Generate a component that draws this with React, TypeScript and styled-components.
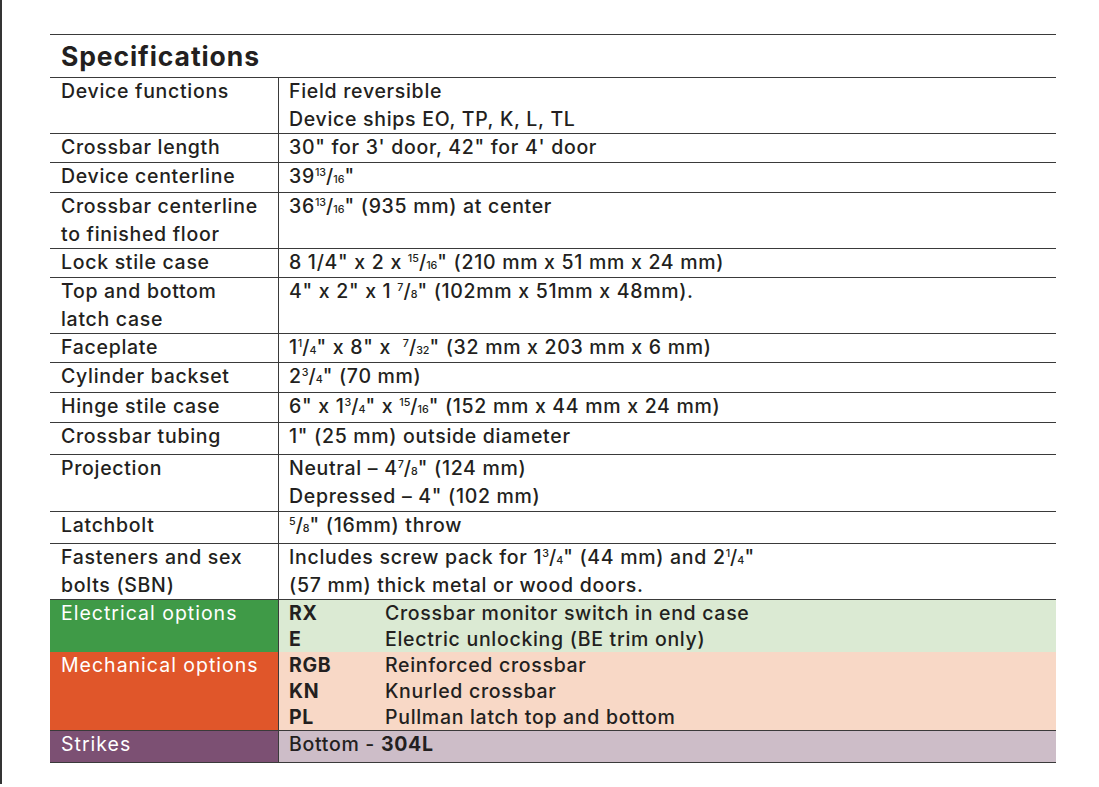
import React from 'react';
import styled, { createGlobalStyle } from 'styled-components';

const GlobalStyle = createGlobalStyle`
	html, body {
		margin: 0;
		padding: 0;
		background: #fff;
	}
	body {
		font-family: Inter, 'Open Sans', 'Liberation Sans', sans-serif;
		color: #231f20;
	}
`;

type Tone = 'green' | 'orange' | 'purple';

const tones: Record<Tone, { dark: string; light: string }> = {
	green: { dark: '#3f9a47', light: '#dbead3' },
	orange: { dark: '#e0562a', light: '#f8d8c6' },
	purple: { dark: '#7c5073', light: '#cdbdc8' },
};

const Frac = ({ n, d }: { n: string; d: string }) => (
	<FracWrap>
		<Num>{n}</Num>/<Den>{d}</Den>
	</FracWrap>
);

interface ISpecRow {
	label: React.ReactNode;
	value: React.ReactNode;
	height: number;
}

const specRows: ISpecRow[] = [
	{
		label: 'Device functions',
		value: (
			<>
				Field reversible
				<br />
				Device ships EO, TP, K, L, TL
			</>
		),
		height: 56,
	},
	{ label: 'Crossbar length', value: `30" for 3' door, 42" for 4' door`, height: 29 },
	{
		label: 'Device centerline',
		value: (
			<>
				39<Frac n="13" d="16" />"
			</>
		),
		height: 30,
	},
	{
		label: (
			<>
				Crossbar centerline
				<br />
				to finished floor
			</>
		),
		value: (
			<>
				36<Frac n="13" d="16" />" (935 mm) at center
			</>
		),
		height: 56,
	},
	{
		label: 'Lock stile case',
		value: (
			<>
				8 1/4" x 2 x <Frac n="15" d="16" />" (210 mm x 51 mm x 24 mm)
			</>
		),
		height: 29,
	},
	{
		label: (
			<>
				Top and bottom
				<br />
				latch case
			</>
		),
		value: (
			<>
				4" x 2" x 1 <Frac n="7" d="8" />" (102mm x 51mm x 48mm).
			</>
		),
		height: 56,
	},
	{
		label: 'Faceplate',
		value: (
			<>
				1<Frac n="1" d="4" />" x 8" x &nbsp;<Frac n="7" d="32" />" (32 mm x 203 mm x 6 mm)
			</>
		),
		height: 29,
	},
	{
		label: 'Cylinder backset',
		value: (
			<>
				2<Frac n="3" d="4" />" (70 mm)
			</>
		),
		height: 30,
	},
	{
		label: 'Hinge stile case',
		value: (
			<>
				6" x 1<Frac n="3" d="4" />" x <Frac n="15" d="16" />" (152 mm x 44 mm x 24 mm)
			</>
		),
		height: 30,
	},
	{ label: 'Crossbar tubing', value: '1" (25 mm) outside diameter', height: 32 },
	{
		label: 'Projection',
		value: (
			<>
				Neutral – 4<Frac n="7" d="8" />" (124 mm)
				<br />
				Depressed – 4" (102 mm)
			</>
		),
		height: 57,
	},
	{
		label: 'Latchbolt',
		value: (
			<>
				<Frac n="5" d="8" />" (16mm) throw
			</>
		),
		height: 32,
	},
	{
		label: (
			<>
				Fasteners and sex
				<br />
				bolts (SBN)
			</>
		),
		value: (
			<>
				Includes screw pack for 1<Frac n="3" d="4" />" (44 mm) and 2<Frac n="1" d="4" />"
				<br />
				(57 mm) thick metal or wood doors.
			</>
		),
		height: 56,
	},
];

interface IOptionGroup {
	label: string;
	tone: Tone;
	items: [string, string][];
	height: number;
}

const optionGroups: IOptionGroup[] = [
	{
		label: 'Electrical options',
		tone: 'green',
		height: 52,
		items: [
			['RX', 'Crossbar monitor switch in end case'],
			['E', 'Electric unlocking (BE trim only)'],
		],
	},
	{
		label: 'Mechanical options',
		tone: 'orange',
		height: 79,
		items: [
			['RGB', 'Reinforced crossbar'],
			['KN', 'Knurled crossbar'],
			['PL', 'Pullman latch top and bottom'],
		],
	},
];

const App = () => (
	<>
		<GlobalStyle />
		<Page>
			<Table>
				<Heading>Specifications</Heading>
				{specRows.map((row, i) => (
					<Row key={i} $h={row.height}>
						<LabelCell>{row.label}</LabelCell>
						<ValueCell>{row.value}</ValueCell>
					</Row>
				))}
				{optionGroups.map((group) => (
					<Row key={group.label} $h={group.height} $lh={26}>
						<LabelCell $bg={tones[group.tone].dark} $light>
							{group.label}
						</LabelCell>
						<ValueCell $bg={tones[group.tone].light}>
							{group.items.map(([code, text]) => (
								<OptionLine key={code}>
									<Code>{code}</Code>
									<span>{text}</span>
								</OptionLine>
							))}
						</ValueCell>
					</Row>
				))}
				<Row $h={32} $lh={26}>
					<LabelCell $bg={tones.purple.dark} $light>
						Strikes
					</LabelCell>
					<ValueCell $bg={tones.purple.light}>
						Bottom - <b>304L</b>
					</ValueCell>
				</Row>
			</Table>
		</Page>
	</>
);

export default App;

const Page = styled.div`
	box-sizing: border-box;
	min-height: 784px;
	border-left: 2px solid #343434;
	padding: 34px 43px 20px 48px;
`;

const Table = styled.div`
	width: 1006px;
	border-top: 1px solid #3a3a3a;
	font-size: 19.5px;
	font-weight: 500;
	letter-spacing: 0.7px;
`;

const Heading = styled.div`
	height: 43px;
	box-sizing: border-box;
	padding: 4px 0 0 11px;
	font-size: 26.5px;
	font-weight: 700;
	line-height: 34px;
	letter-spacing: 0.9px;
	border-bottom: 1px solid #3a3a3a;
`;

const Row = styled.div<{ $h: number; $lh?: number }>`
	display: grid;
	grid-template-columns: 229px 1fr;
	box-sizing: border-box;
	height: ${(p) => p.$h}px;
	line-height: ${(p) => p.$lh || 27.5}px;
	border-bottom: 1px solid #3a3a3a;
`;

const LabelCell = styled.div<{ $bg?: string; $light?: boolean }>`
	padding-left: 11px;
	background: ${(p) => p.$bg || 'transparent'};
	color: ${(p) => (p.$light ? '#fff' : 'inherit')};
	font-weight: ${(p) => (p.$light ? 400 : 500)};
	letter-spacing: ${(p) => (p.$light ? '1px' : 'inherit')};
	border-right: 1px solid #3a3a3a;
`;

const ValueCell = styled.div<{ $bg?: string }>`
	padding-left: 10px;
	background: ${(p) => p.$bg || 'transparent'};
	b {
		font-weight: 700;
	}
`;

const OptionLine = styled.div`
	display: flex;
`;

const Code = styled.span`
	width: 96px;
	font-weight: 700;
`;

const FracWrap = styled.span`
	letter-spacing: 0;
`;

const Num = styled.span`
	font-size: 0.55em;
	vertical-align: 0.62em;
	line-height: 0;
`;

const Den = styled.span`
	font-size: 0.55em;
	line-height: 0;
`;
